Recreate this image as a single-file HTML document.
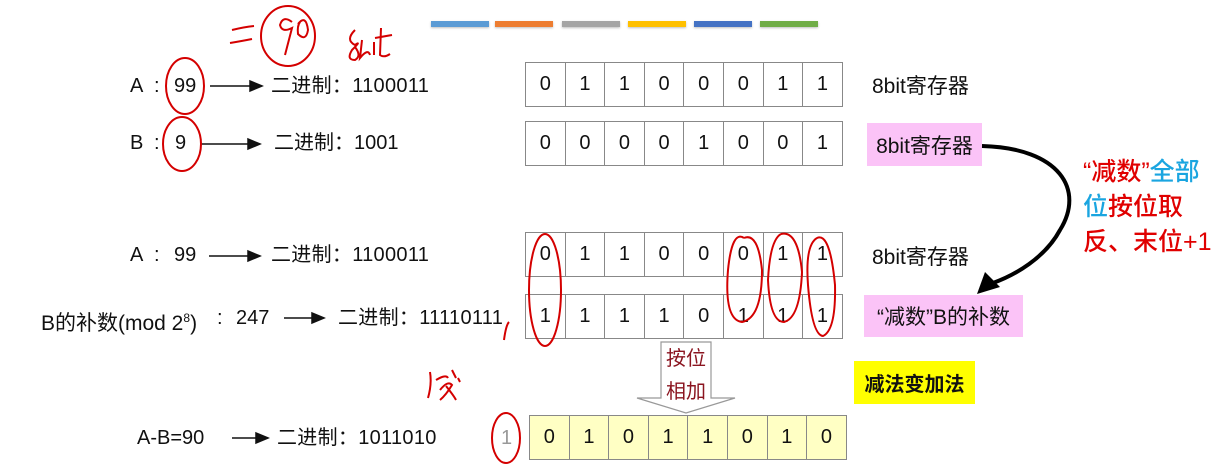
<!DOCTYPE html>
<html><head><meta charset="utf-8"><style>
body{margin:0;width:1230px;height:466px;background:#fff;position:relative;overflow:hidden;font-family:"Liberation Sans","Noto Sans CJK SC",sans-serif;color:#111}
.t{position:absolute;font-size:20px;line-height:24px;white-space:nowrap}
.reg{position:absolute;display:flex;border:1px solid #888;border-right:none}
.reg div{width:38.6px;border-right:1px solid #888;text-align:center;font-size:20px;display:flex;align-items:center;justify-content:center}
.bar{position:absolute;top:21px;height:6px;width:58px;box-shadow:0 1px 2px rgba(0,0,0,.25)}
.box{position:absolute;display:flex;align-items:center;justify-content:center;font-size:20px}
</style></head><body>
<div class="bar" style="left:431px;background:#5b9bd5"></div>
<div class="bar" style="left:495px;background:#ed7d31"></div>
<div class="bar" style="left:562px;background:#a5a5a5"></div>
<div class="bar" style="left:628px;background:#ffc000"></div>
<div class="bar" style="left:694px;background:#4472c4"></div>
<div class="bar" style="left:760px;background:#70ad47"></div>

<div class="t" style="left:130px;top:74px">A</div><div class="t" style="left:154px;top:74px">:</div><div class="t" style="left:174px;top:74px">99</div>
<div class="t" style="left:271px;top:74px;letter-spacing:0.3px">二进制：1100011</div>
<div class="t" style="left:130px;top:131px">B</div><div class="t" style="left:154px;top:131px">:</div><div class="t" style="left:175px;top:131px">9</div>
<div class="t" style="left:274px;top:131px">二进制：1001</div>
<div class="t" style="left:130px;top:243px">A</div><div class="t" style="left:154px;top:243px">:</div><div class="t" style="left:174px;top:243px">99</div>
<div class="t" style="left:271px;top:243px;letter-spacing:0.3px">二进制：1100011</div>
<div class="t" style="left:41px;top:306px;font-size:21px">B的补数(mod 2<sup style="font-size:12px">8</sup>)</div><div class="t" style="left:217px;top:306px">:</div><div class="t" style="left:236px;top:306px">247</div>
<div class="t" style="left:338px;top:306px;letter-spacing:0.3px">二进制：11110111</div>
<div class="t" style="left:137px;top:426px">A-B=90</div>
<div class="t" style="left:277px;top:426px;letter-spacing:0.3px">二进制：1011010</div>
<div class="t" style="left:501px;top:426px;color:#999">1</div>

<div class="reg" style="left:525px;top:62px;height:43px"><div>0</div><div>1</div><div>1</div><div>0</div><div>0</div><div>0</div><div>1</div><div>1</div></div>
<div class="reg" style="left:525px;top:121px;height:43px"><div>0</div><div>0</div><div>0</div><div>0</div><div>1</div><div>0</div><div>0</div><div>1</div></div>
<div class="reg" style="left:525px;top:232px;height:43px"><div>0</div><div>1</div><div>1</div><div>0</div><div>0</div><div>0</div><div>1</div><div>1</div></div>
<div class="reg" style="left:525px;top:294px;height:43px"><div>1</div><div>1</div><div>1</div><div>1</div><div>0</div><div>1</div><div>1</div><div>1</div></div>
<div class="reg" style="left:529px;top:415px;height:43px;background:#ffffc4"><div>0</div><div>1</div><div>0</div><div>1</div><div>1</div><div>0</div><div>1</div><div>0</div></div>

<div class="t" style="left:872px;top:75px;font-size:21px">8bit寄存器</div>
<div class="box" style="left:867px;top:123px;width:115px;height:43px;background:#fbc3f7;font-size:21px">8bit寄存器</div>
<div class="t" style="left:872px;top:246px;font-size:21px">8bit寄存器</div>
<div class="box" style="left:864px;top:295px;width:159px;height:42px;background:#fbc3f7;font-size:21px">“减数”B的补数</div>
<div class="box" style="left:854px;top:361px;width:121px;height:43px;background:#ffff00;font-weight:bold">减法变加法</div>

<div style="position:absolute;left:1083px;top:155px;font-size:25px;line-height:35px;color:#e00000;font-weight:500">“减数”<span style="color:#1aa5e0">全部</span><br><span style="color:#1aa5e0">位</span>按位取<br>反、末位+1</div>

<svg width="1230" height="466" style="position:absolute;left:0;top:0">
<g stroke="#111" stroke-width="1.5" fill="#111">
<line x1="210" y1="86" x2="252" y2="86"/><path d="M262 86 L250 81 L250 91Z"/>
<line x1="200" y1="144" x2="250" y2="144"/><path d="M260 144 L248 139 L248 149Z"/>
<line x1="209" y1="256" x2="250" y2="256"/><path d="M260 256 L248 251 L248 261Z"/>
<line x1="284" y1="318" x2="314" y2="318"/><path d="M324 318 L312 313 L312 323Z"/>
<line x1="232" y1="438" x2="258" y2="438"/><path d="M268 438 L256 433 L256 443Z"/>
</g>
<path d="M661 342 H711 V398 H735 L686 413 L637 398 H661 Z" fill="#fff" stroke="#999" stroke-width="1.2"/>
<text x="686" y="365" font-size="20" fill="#8b1520" text-anchor="middle" font-family="Liberation Sans, Noto Sans CJK SC, sans-serif">按位</text>
<text x="686" y="398" font-size="20" fill="#8b1520" text-anchor="middle" font-family="Liberation Sans, Noto Sans CJK SC, sans-serif">相加</text>
<path d="M982 146 C1060 148 1085 190 1060 230 C1045 258 1015 275 993 283" fill="none" stroke="#000" stroke-width="4"/>
<path d="M977 294 L985 272 L1000 287 Z" fill="#000"/>
<g fill="none" stroke="#d40000" stroke-width="2">
<ellipse cx="288" cy="36" rx="27" ry="30"/>
<path d="M232 30 Q244 27 254 26 M230 43 Q242 41 252 39"/>
<path d="M292 22 Q283 15 280 25 Q282 33 292 28 L285 55 M298 24 Q306 14 308 30 Q306 42 298 34 Q297 26 300 22"/>
<path d="M355 30 Q345 40 355 45 Q362 40 352 50 Q346 60 355 60 Q362 56 355 47 M362 40 L360 58 Q368 48 370 55 M374 42 L374 55 M381 28 L380 55 Q384 58 390 54 M375 38 L392 35"/>
<ellipse cx="185" cy="86" rx="19" ry="28"/>
<ellipse cx="182" cy="144" rx="19" ry="27"/>
<ellipse cx="545" cy="290" rx="16" ry="56"/>
<path d="M744 238 Q732 230 728 270 Q724 320 742 322 Q762 318 762 270 Q758 232 744 238"/>
<path d="M781 234 Q770 240 768 280 Q770 322 784 322 Q800 318 802 272 Q798 230 781 234"/>
<path d="M817 238 Q805 245 808 285 Q812 335 823 336 Q836 330 835 285 Q830 232 817 238"/>
<path d="M509 322 Q506 325 504 340"/>
<ellipse cx="506" cy="438" rx="14" ry="25"/>
<path d="M430 372 Q432 384 428 398 M436 380 Q446 374 448 378 M440 390 Q448 380 452 385 Q446 395 440 400 M446 386 Q454 396 456 400 M452 370 L456 378 M458 378 L460 382"/>
</g>
</svg>
</body></html>
